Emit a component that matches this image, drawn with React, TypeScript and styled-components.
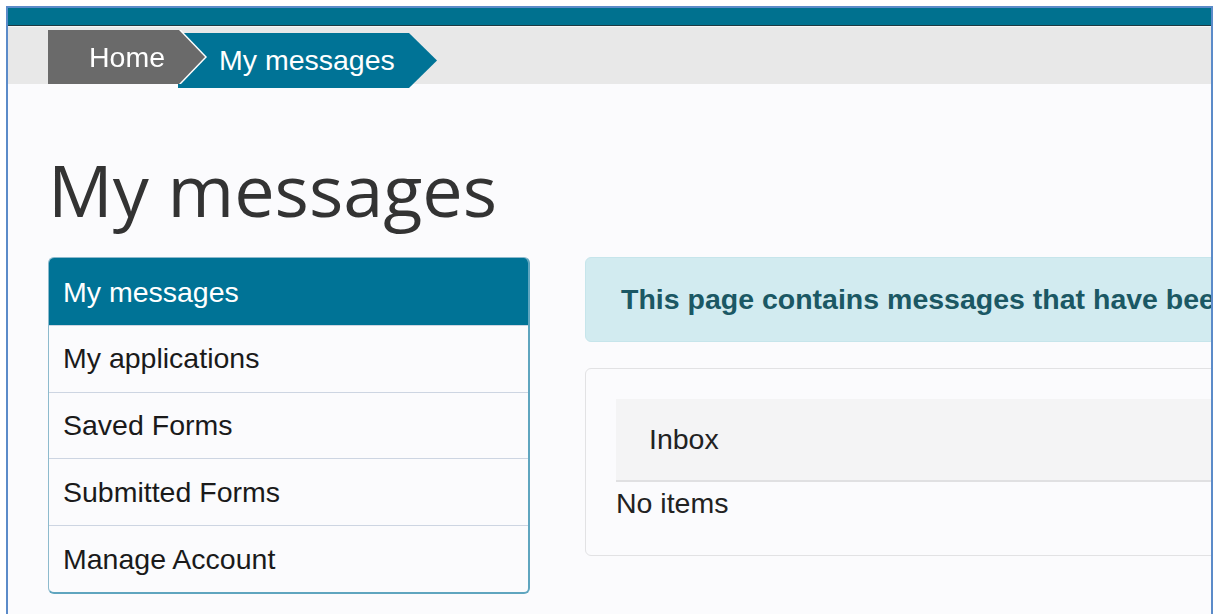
import React from "react";
import styled, { createGlobalStyle } from "styled-components";

const GlobalStyle = createGlobalStyle`
  html, body {
    margin: 0;
    padding: 0;
    background: #ffffff;
    overflow: hidden;
  }
  body {
    font-family: "Liberation Sans", Arial, sans-serif;
  }
  * { box-sizing: border-box; }
`;

const Frame = styled.div`
  margin: 6px 0 0 6px;
  width: 1207px;
  height: 608px;
  border: 2px solid #5b8bc9;
  border-bottom: none;
  background: #fbfbfd;
  overflow: hidden;
`;

const TopBar = styled.div`
  height: 18px;
  background: #00718f;
  border-bottom: 1px solid #1e3a42;
`;

const Crumbs = styled.nav`
  display: flex;
  align-items: flex-start;
  height: 58px;
  padding: 3px 0 0 40px;
  background: #e8e8e8;
  border-top: 1px solid #f6f6f6;
  font-size: 28.5px;
  color: #ffffff;
`;

const HomeWrap = styled.div`
  position: relative;
  z-index: 2;
  filter: drop-shadow(2px 0 0 #ffffff);
`;

const HomeCrumb = styled.a`
  display: flex;
  align-items: center;
  width: 157px;
  height: 54px;
  padding-left: 41px;
  background: #6a6a6a;
  color: #ffffff;
  text-decoration: none;
  clip-path: polygon(0 0, 131px 0, 100% 50%, 131px 100%, 0 100%);
`;

const CurrentCrumb = styled.span`
  display: flex;
  align-items: center;
  width: 259px;
  height: 55px;
  margin: 3px 0 0 -27px;
  padding-left: 41px;
  background: #007396;
  clip-path: polygon(0 0, calc(100% - 28px) 0, 100% 50%, calc(100% - 28px) 100%, 0 100%);
`;

const Content = styled.main`
  padding: 0 0 0 40px;
`;

const Title = styled.h1`
  margin: 66px 0 28px;
  font-family: "Open Sans", "Liberation Sans", sans-serif;
  font-weight: 400;
  font-size: 72px;
  line-height: 1.1;
  color: #333333;
  white-space: nowrap;
`;

const Columns = styled.div`
  display: flex;
  align-items: flex-start;
  gap: 55px;
`;

const SideNav = styled.ul`
  flex: 0 0 482px;
  margin: 0;
  padding: 0;
  list-style: none;
  border: 1px solid #8dbacd;
  border-right: 2px solid #5fa5bf;
  border-bottom: 2px solid #5fa5bf;
  border-radius: 6px;
  overflow: hidden;
  background: #fbfbfd;
`;

const NavItem = styled.li<{ $active?: boolean }>`
  padding: 12.5px 14px;
  font-size: 28.5px;
  line-height: 1.4286;
  color: ${(p) => (p.$active ? "#ffffff" : "#1a1a1a")};
  background: ${(p) => (p.$active ? "#007396" : "transparent")};
  border-top: 1px solid ${(p) => (p.$active ? "#007396" : "#cdd5e2")};
  white-space: nowrap;

  &:first-child {
    border-top: none;
    padding-top: 13.5px;
  }
`;

const MainCol = styled.section`
  flex: 0 0 820px;
  display: flex;
  flex-direction: column;
  gap: 26px;
`;

const Alert = styled.div`
  padding: 21px 35px;
  background: #d2ebf0;
  border: 1px solid #c6e5eb;
  border-radius: 6px;
  color: #1b5864;
  font-weight: 700;
  font-size: 28.5px;
  line-height: 1.4286;
  white-space: nowrap;
`;

const Panel = styled.div`
  padding: 30px 30px 32px;
  border: 1px solid #e2e2e4;
  border-radius: 6px;
  background: #fbfbfd;
`;

const PanelHeading = styled.div`
  padding: 20px 33px;
  background: #f4f4f5;
  border-bottom: 2px solid #e0e0e2;
  font-size: 28.5px;
  line-height: 1.4286;
  color: #222222;
`;

const EmptyNote = styled.div`
  padding-top: 1px;
  font-size: 28.5px;
  line-height: 1.4286;
  color: #222222;
`;

const navItems = [
  "My messages",
  "My applications",
  "Saved Forms",
  "Submitted Forms",
  "Manage Account",
];

export default function App() {
  return (
    <>
      <GlobalStyle />
      <Frame>
        <TopBar />
        <Crumbs>
          <HomeWrap>
            <HomeCrumb href="#">Home</HomeCrumb>
          </HomeWrap>
          <CurrentCrumb>My messages</CurrentCrumb>
        </Crumbs>
        <Content>
          <Title>My messages</Title>
          <Columns>
            <SideNav>
              {navItems.map((item, i) => (
                <NavItem key={item} $active={i === 0}>
                  {item}
                </NavItem>
              ))}
            </SideNav>
            <MainCol>
              <Alert>This page contains messages that have been sent to you.</Alert>
              <Panel>
                <PanelHeading>Inbox</PanelHeading>
                <EmptyNote>No items</EmptyNote>
              </Panel>
            </MainCol>
          </Columns>
        </Content>
      </Frame>
    </>
  );
}
